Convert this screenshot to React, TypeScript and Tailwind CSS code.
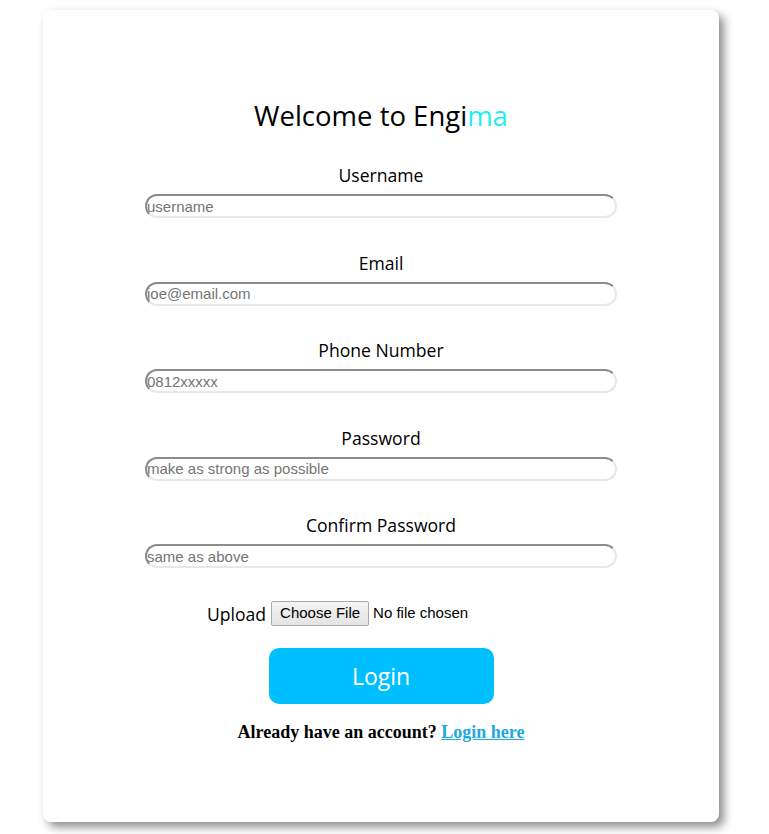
import React from "react";

function Field({ label, placeholder, first }: { label: string; placeholder: string; first?: boolean }) {
  return (
    <div className={`flex flex-col items-center ${first ? "mt-[32px]" : "mt-[33.5px]"}`}>
      <label className="text-[17.6px] leading-[22px] text-black font-['Open_Sans',sans-serif]">{label}</label>
      <input
        placeholder={placeholder}
        className="mt-[8px] h-[24px] w-[472px] rounded-[12px] border-2 border-t-[#8c8c8c] border-l-[#8c8c8c] border-b-[#e8e8e8] border-r-[#e8e8e8] bg-white p-0 text-[15px] font-['Liberation_Sans',Arial,sans-serif] text-black placeholder:text-[#757575] outline-none"
      />
    </div>
  );
}

export default function App() {
  return (
    <div className="min-h-[834px] w-full bg-white pt-[10px] pl-[43px]">
      <div className="flex h-[812px] w-[676px] flex-col items-center rounded-[8px] bg-white pt-[90px] shadow-[5px_5px_10px_rgba(0,0,0,0.45)]">
        <h1 className="text-[27.5px] leading-[32px] text-black font-['Open_Sans',sans-serif]">
          Welcome to Engi<span className="text-[#22eeee]">ma</span>
        </h1>
        <Field first label="Username" placeholder="username" />
        <Field label="Email" placeholder="joe@email.com" />
        <Field label="Phone Number" placeholder="0812xxxxx" />
        <Field label="Password" placeholder="make as strong as possible" />
        <Field label="Confirm Password" placeholder="same as above" />
        <div className="mt-[33px] flex h-[25px] items-center">
          <span className="text-[17.6px] leading-[22px] text-black font-['Open_Sans',sans-serif]">Upload</span>
          <span className="ml-[5px] flex w-[284px] items-center">
            <span className="flex h-[25px] w-[98px] items-center justify-center rounded-[2px] border border-[#a9a9a9] bg-gradient-to-b from-[#f4f4f4] to-[#e4e4e4] text-[15px] text-black font-['Liberation_Sans',Arial,sans-serif]">
              Choose File
            </span>
            <span className="ml-[4px] text-[15px] text-black font-['Liberation_Sans',Arial,sans-serif]">No file chosen</span>
          </span>
        </div>
        <button className="mt-[22px] flex h-[56px] w-[225px] items-center justify-center rounded-[10px] bg-[#00bfff] text-[23px] text-white font-['Open_Sans',sans-serif]">
          Login
        </button>
        <p className="mt-[17px] text-[18px] leading-[22px] font-bold text-black font-['Liberation_Serif','Times_New_Roman',serif]">
          Already have an account?{" "}
          <a href="#" className="text-[#20a8e0] underline">Login here</a>
        </p>
      </div>
    </div>
  );
}
